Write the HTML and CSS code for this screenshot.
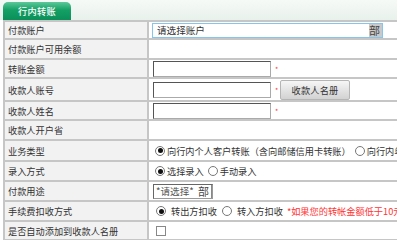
FILE: index.html
```html
<!DOCTYPE html>
<html>
<head>
    <meta charset="UTF-8">
    <title>行内转账</title>
    <link rel="stylesheet" href="styles.css">
</head>
<body>
    <div class="tabs">
        <div class="tab">行内转账</div>
    </div>
    <div class="form">
        <div class="label">付款账户</div>
        <div class="value">
            <div class="select wide"><span class="select-text">请选择账户</span><span class="select-btn">部</span></div>
        </div>

        <div class="label">付款账户可用余额</div>
        <div class="value"></div>

        <div class="label">转账金额</div>
        <div class="value"><span class="input"></span><span class="req">*</span></div>

        <div class="label">收款人账号</div>
        <div class="value"><span class="input"></span><span class="req">*</span><button class="btn">收款人名册</button></div>

        <div class="label">收款人姓名</div>
        <div class="value"><span class="input"></span><span class="req">*</span></div>

        <div class="label">收款人开户省</div>
        <div class="value"></div>

        <div class="label">业务类型</div>
        <div class="value">
            <span class="radio checked"></span><span class="opt">向行内个人客户转账（含向邮储信用卡转账）</span>
            <span class="radio"></span><span class="opt">向行内单位客户转账</span>
        </div>

        <div class="label">录入方式</div>
        <div class="value">
            <span class="radio checked"></span><span class="opt">选择录入</span>
            <span class="radio"></span><span class="opt">手动录入</span>
        </div>

        <div class="label">付款用途</div>
        <div class="value">
            <div class="select small"><span class="select-text grey">*请选择*</span><span class="select-btn plain">部</span></div>
        </div>

        <div class="label">手续费扣收方式</div>
        <div class="value">
            <span class="radio checked pad"></span><span class="opt">转出方扣收</span>
            <span class="radio pad"></span><span class="opt">转入方扣收</span>
            <span class="note">*如果您的转帐金额低于10元，手续费按实际收取</span>
        </div>

        <div class="label">是否自动添加到收款人名册</div>
        <div class="value"><span class="check"></span></div>
    </div>
</body>
</html>
```

FILE: styles.css
```css
html, body {
    overflow: hidden;
}
body {
    margin: 0;
    font-family: "Noto Sans CJK SC", "Noto Sans", sans-serif;
    font-size: 9.2px;
    color: #333;
    background: #fff;
}
.tabs {
    height: 20px;
    padding-left: 3px;
    display: flex;
    align-items: flex-end;
    background: linear-gradient(to bottom, #f6faf7, #e8f1eb);
}
.tab {
    width: 68px;
    height: 18px;
    line-height: 18px;
    text-align: center;
    color: #fff;
    font-weight: 500;
    letter-spacing: 0.3px;
    border-radius: 5px 5px 0 0;
    background: linear-gradient(to bottom, #5cc899, #14a065 45%, #0a8f58);
}
.form {
    width: 620px;
    margin-left: 3px;
    padding: 2px 0 2px 2px;
    background: #c6c6c6;
    display: grid;
    grid-template-columns: 142px 1fr;
    grid-template-rows: 16px 18px 17px 21px 17px 18px 19px 18px 18px 18px 17px;
    gap: 2px;
}
.label {
    background: #f2f2f2;
    padding-left: 3px;
    display: flex;
    align-items: center;
    white-space: nowrap;
}
.value {
    background: #fff;
    padding-left: 4px;
    display: flex;
    align-items: center;
    white-space: nowrap;
}
.select {
    display: flex;
    align-items: center;
    box-sizing: border-box;
    background: #fff;
}
.select.wide {
    width: 231px;
    height: 15px;
    border: 1px solid #86c6ea;
    margin-left: -1px;
}
.select.small {
    width: 60px;
    height: 15px;
    border: 1px solid #999;
    border-top-color: #666;
    border-left-color: #666;
}
.select-text {
    flex: 1;
    padding-left: 4px;
    font-size: 9.6px;
}
.select-text.grey {
    padding-left: 2px;
    color: #555;
}
.select-btn {
    width: 13px;
    height: 100%;
    overflow: hidden;
    background: #c9c9c9;
    color: #444;
    font-size: 11px;
    line-height: 13px;
}
.select-btn.plain {
    background: #fff;
    border-right: 1px solid #888;
}
.input {
    display: inline-block;
    box-sizing: border-box;
    width: 118px;
    height: 16px;
    border: 1px solid #aaa;
    border-top-color: #555;
    border-left-color: #555;
}
.req {
    color: #f33;
    font-size: 7px;
    margin-left: 4px;
    width: 4px;
}
.btn {
    margin-left: 1px;
    width: 70px;
    height: 20px;
    padding: 0;
    font-family: inherit;
    font-size: 9.2px;
    color: #333;
    letter-spacing: 0.2px;
    border: 1px solid #b5b5b5;
    border-radius: 2px;
    background: linear-gradient(to bottom, #f6f6f6, #e0e0e0 60%, #d2d2d2);
}
.radio {
    display: inline-block;
    box-sizing: border-box;
    width: 10px;
    height: 10px;
    border: 1px solid #777;
    border-radius: 50%;
    background: #fff;
    position: relative;
    margin-left: 2px;
    margin-right: 2px;
}
.radio.checked::after {
    content: "";
    position: absolute;
    left: 1.5px;
    top: 1.5px;
    width: 5px;
    height: 5px;
    border-radius: 50%;
    background: #111;
}
.radio.pad {
    margin-left: 3px;
    margin-right: 5px;
}
.opt {
    margin-right: 2px;
}
.note {
    color: #f33;
    margin-left: 2px;
}
.check {
    display: inline-block;
    box-sizing: border-box;
    width: 10px;
    height: 10px;
    margin-left: 3px;
    border: 1px solid #888;
    background: #fff;
}
```
